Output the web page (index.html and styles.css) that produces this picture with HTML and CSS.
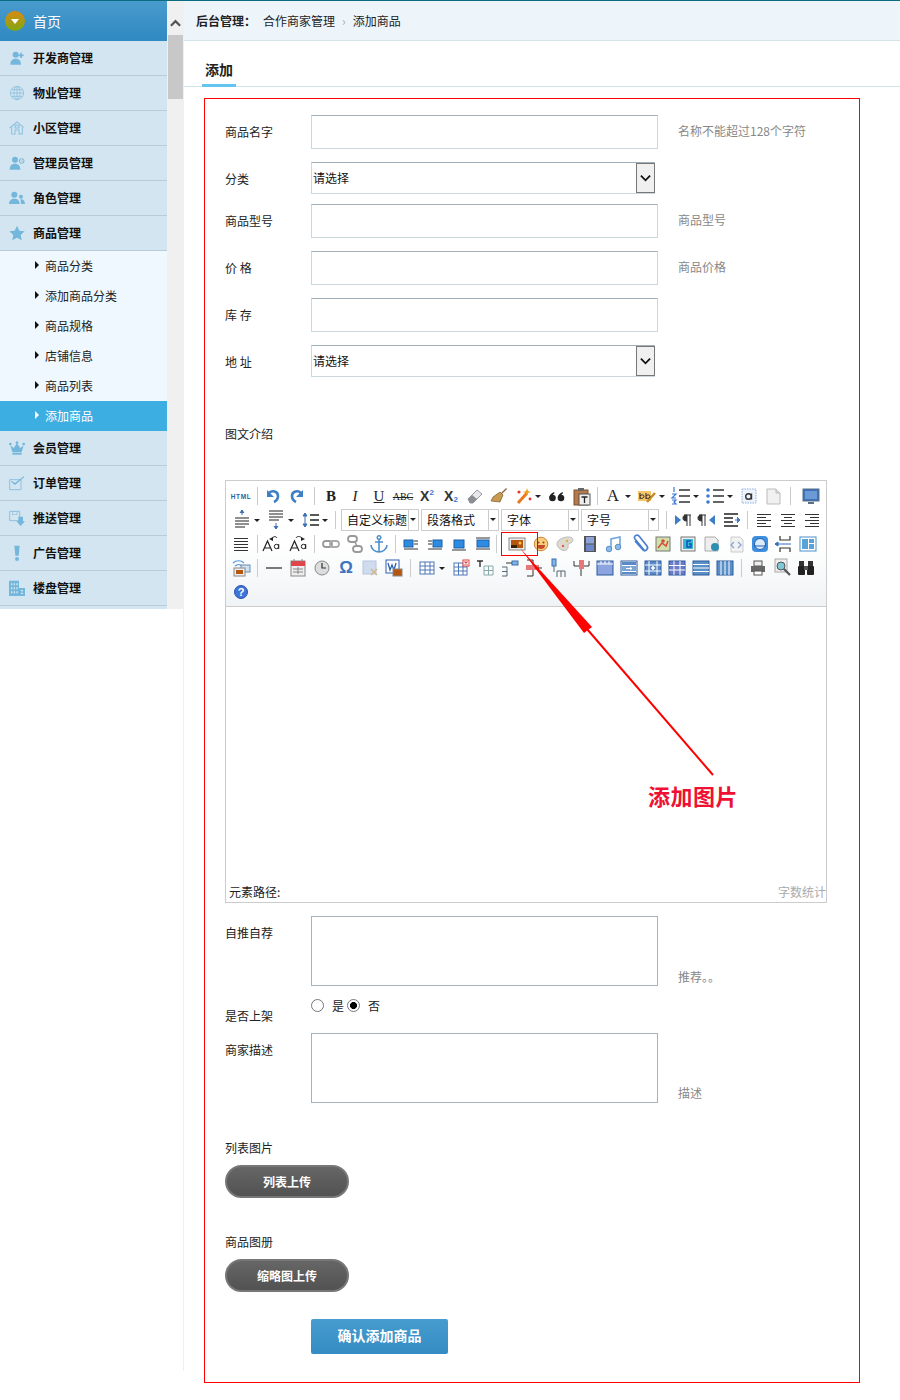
FILE: index.html
```html
<!DOCTYPE html>
<html lang="zh">
<head>
<meta charset="utf-8">
<title>添加商品</title>
<link rel="stylesheet" href="styles.css">
</head>
<body>
<svg class="defs" aria-hidden="true">
  <symbol id="undo" viewBox="0 0 24 24"><path d="M8 9c3-3 9-2 9 3 0 3-2 5-4 6" fill="none" stroke="#3d7fc6" stroke-width="2.6"/><path d="M6 6v7h7z" fill="#3d7fc6"/></symbol>
  <symbol id="redo" viewBox="0 0 24 24"><g transform="matrix(-1 0 0 1 24 0)"><path d="M8 9c3-3 9-2 9 3 0 3-2 5-4 6" fill="none" stroke="#3d7fc6" stroke-width="2.6"/><path d="M6 6v7h7z" fill="#3d7fc6"/></g></symbol>
  <symbol id="eraser" viewBox="0 0 24 24"><path d="M5 15l9-9 5 4-9 9H7z" fill="#e8e8ea" stroke="#9a9aa2"/><path d="M5 15l4-4 5 4-4 4H7z" fill="#8c8c94"/></symbol>
  <symbol id="brush" viewBox="0 0 24 24"><path d="M14 9l5-5 1 1-5 5z" fill="#8a6a44"/><path d="M13 8l3 3-3 7-9-1 2-4z" fill="#c79a4e" stroke="#7a5a30" stroke-width=".7"/></symbol>
  <symbol id="wand" viewBox="0 0 24 24"><path d="M7 19L16 9" stroke="#e87a1c" stroke-width="3"/><path d="M16 4l1 3 3 1-3 1-1 3-1-3-3-1 3-1z" fill="#f0a020"/><circle cx="8" cy="8" r="1.6" fill="#e23a2a"/><circle cx="19" cy="15" r="1.4" fill="#e23a2a"/></symbol>
  <symbol id="quote" viewBox="0 0 24 24"><circle cx="7.500" cy="14" r="3.300" fill="#222"/><circle cx="16" cy="14" r="3.300" fill="#222"/><path d="M4.300 14c0-3 2-5 5-6v1.500c-1.500 1-2 2-2 3.500zM12.800 14c0-3 2-5 5-6v1.500c-1.500 1-2 2-2 3.500z" fill="#222"/></symbol>
  <symbol id="paste" viewBox="0 0 24 24"><rect x="5" y="6" width="14" height="15" fill="#b5794a" stroke="#7a4f2c"/><rect x="9" y="4" width="6" height="3" fill="#666"/><rect x="10" y="10" width="11" height="11" fill="#eee" stroke="#555"/><path d="M12.500 13h6M15.500 13v6" stroke="#222" stroke-width="1.300"/></symbol>
  <symbol id="ab" viewBox="0 0 24 24"><rect x="3" y="7" width="13" height="10" fill="#f6c469"/><path d="M12 18l8-9" stroke="#c98a2a" stroke-width="2.500"/><path d="M5 9v6M5 12c2-2 4-1 4 .5S7 15 5 14M11 9v6M11 12c2-2 4-1 4 .5S13 15 11 14" stroke="#222" fill="none"/></symbol>
  <symbol id="ol" viewBox="0 0 24 24"><path d="M10 6h11M10 12h11M10 18h11" stroke="#333" stroke-width="1.300"/><path d="M5 3v5M3 10h4l-4 4h4M3 16h4l-2 2 2 2H3" fill="none" stroke="#3b78d8" stroke-width="1.200"/></symbol>
  <symbol id="ul" viewBox="0 0 24 24"><path d="M10 6h11M10 12h11M10 18h11" stroke="#333" stroke-width="1.300"/><circle cx="5" cy="6" r="1.800" fill="#3b78d8"/><circle cx="5" cy="12" r="1.800" fill="#3b78d8"/><circle cx="5" cy="18" r="1.800" fill="#3b78d8"/></symbol>
  <symbol id="abox" viewBox="0 0 24 24"><rect x="5" y="5" width="14" height="14" fill="#eef3fb" stroke="#8fb0e0" stroke-dasharray="1.500 1"/><circle cx="11.500" cy="12.500" r="2.800" fill="none" stroke="#333" stroke-width="1.400"/><path d="M14.500 9.500v6" stroke="#333" stroke-width="1.400"/></symbol>
  <symbol id="page" viewBox="0 0 24 24"><path d="M6 5h9l4 4v11H6z" fill="#f1f1f1" stroke="#bbb"/><path d="M15 5v4h4" fill="#ddd" stroke="#bbb"/></symbol>
  <symbol id="monitor" viewBox="0 0 24 24"><rect x="4" y="5" width="16" height="12" fill="#3b72b8" stroke="#5a6f8c"/><rect x="6" y="7" width="12" height="8" fill="#6b9ad6"/><path d="M9 19h6" stroke="#5a6f8c" stroke-width="2"/></symbol>
  <symbol id="spup" viewBox="0 0 24 24"><path d="M12 2v5M10 5l2-3 2 3" stroke="#3d6fb0" fill="#3d6fb0"/><path d="M5 10h14M5 13h14M5 16h14M5 19h10" stroke="#222" stroke-width="1.200"/></symbol>
  <symbol id="spdn" viewBox="0 0 24 24"><path d="M5 3h14M5 6h14M5 9h14M5 12h10" stroke="#222" stroke-width="1.200"/><path d="M12 15v6M10 18l2 3 2-3" stroke="#3d6fb0" fill="#3d6fb0"/></symbol>
  <symbol id="lh" viewBox="0 0 24 24"><path d="M7 5v14M5 8l2-3 2 3zM5 16l2 3 2-3z" stroke="#3d6fb0" fill="#3d6fb0"/><path d="M12 7h9M12 12h9M12 17h9" stroke="#222" stroke-width="1.300"/></symbol>
  <symbol id="ltr" viewBox="0 0 24 24"><path d="M4 7l6 5-6 5z" fill="#3d7fc6"/><path d="M13 7h7M16 7v11M19 7v11M16 13c-3 0-4-1-4-3s1-3 4-3" stroke="#333" fill="#333"/></symbol>
  <symbol id="rtl" viewBox="0 0 24 24"><path d="M20 7l-6 5 6 5z" fill="#3d7fc6"/><path d="M4 7h7M7 7v11M10 7v11M7 13c-3 0-4-1-4-3s1-3 4-3" stroke="#333" fill="#333"/></symbol>
  <symbol id="indent" viewBox="0 0 24 24"><path d="M5 6h14M5 10h9M5 14h9M5 18h14" stroke="#222" stroke-width="1.400"/><path d="M16 12h5M18 9l3 3-3 3" stroke="#3d7fc6" fill="#3d7fc6"/></symbol>
  <symbol id="al" viewBox="0 0 24 24"><path d="M5 6.500h14M5 9.500h9M5 12.500h14M5 15.500h9M5 18.500h14" stroke="#333" stroke-width="1.100"/></symbol>
  <symbol id="ac" viewBox="0 0 24 24"><path d="M5 6.500h14M8 9.500h8M5 12.500h14M8 15.500h8M5 18.500h14" stroke="#333" stroke-width="1.100"/></symbol>
  <symbol id="ar" viewBox="0 0 24 24"><path d="M5 6.500h14M10 9.500h9M5 12.500h14M10 15.500h9M5 18.500h14" stroke="#333" stroke-width="1.100"/></symbol>
  <symbol id="aj" viewBox="0 0 24 24"><path d="M5 6.500h14M5 9.500h14M5 12.500h14M5 15.500h14M5 18.500h14" stroke="#333" stroke-width="1.100"/></symbol>
  <symbol id="au" viewBox="0 0 24 24"><path d="M3 19L7.500 9l4.500 10M5 16h5" fill="none" stroke="#222" stroke-width="1.200"/><path d="M12 7c1-3 4-3 5-1" fill="none" stroke="#222"/><path d="M9 7l4-2v4z" fill="#222"/><circle cx="16.500" cy="14.500" r="2.200" fill="none" stroke="#222"/><path d="M18.700 12v5" stroke="#222"/></symbol>
  <symbol id="ad" viewBox="0 0 24 24"><path d="M3 19L7.500 9l4.500 10M5 16h5" fill="none" stroke="#222" stroke-width="1.200"/><path d="M9 6c1-2 4-2 6 0" fill="none" stroke="#222"/><path d="M18 7l-4-2v4z" fill="#222"/><circle cx="16.500" cy="14.500" r="2.200" fill="none" stroke="#222"/><path d="M18.700 12v5" stroke="#222"/></symbol>
  <symbol id="link" viewBox="0 0 24 24"><rect x="4" y="9" width="9" height="6" rx="3" fill="none" stroke="#999" stroke-width="1.800"/><rect x="11" y="9" width="9" height="6" rx="3" fill="none" stroke="#aaa" stroke-width="1.800"/></symbol>
  <symbol id="unlink" viewBox="0 0 24 24"><rect x="5" y="4" width="9" height="6" rx="3" fill="none" stroke="#999" stroke-width="1.800"/><rect x="10" y="14" width="9" height="6" rx="3" fill="none" stroke="#999" stroke-width="1.800"/><path d="M12 10l2 4" stroke="#999" stroke-width="1.500"/></symbol>
  <symbol id="anchor" viewBox="0 0 24 24"><circle cx="12" cy="5.500" r="1.800" fill="none" stroke="#4f8fc8" stroke-width="1.400"/><path d="M12 7v13M8 10h8M4 13c0 4 4 7 8 7s8-3 8-7" fill="none" stroke="#4f8fc8" stroke-width="1.600"/></symbol>
  <symbol id="il" viewBox="0 0 24 24"><rect x="5" y="8" width="9" height="7" fill="#2e8be0" stroke="#1a5fa8"/><path d="M15 9h4M15 12h4M5 17h14" stroke="#333"/></symbol>
  <symbol id="ir" viewBox="0 0 24 24"><rect x="10" y="8" width="9" height="7" fill="#2e8be0" stroke="#1a5fa8"/><path d="M5 9h4M5 12h4M5 17h14" stroke="#333"/></symbol>
  <symbol id="ic" viewBox="0 0 24 24"><rect x="7" y="8" width="10" height="8" fill="#2e8be0" stroke="#1a5fa8"/><path d="M5 18h14" stroke="#333"/></symbol>
  <symbol id="in" viewBox="0 0 24 24"><path d="M5 6h14M5 17h14" stroke="#333"/><rect x="6" y="8" width="12" height="7" fill="#2e8be0" stroke="#1a5fa8"/></symbol>
  <symbol id="img" viewBox="0 0 24 24"><rect x="4" y="6" width="16" height="12" fill="#ececec" stroke="#888"/><rect x="6" y="8" width="12" height="8" fill="#b4560f"/><circle cx="15" cy="11" r="1.500" fill="#ffc64a"/><path d="M6 13h6v3H6z" fill="#3a2208"/></symbol>
  <symbol id="smile" viewBox="0 0 24 24"><circle cx="12" cy="12" r="6.800" fill="#f8cf78" stroke="#c9833a"/><circle cx="9.500" cy="10.500" r="1" fill="#a33"/><circle cx="14.500" cy="10.500" r="1" fill="#a33"/><path d="M8 13h8c0 3-2 4-4 4s-4-1-4-4z" fill="#c4472f"/></symbol>
  <symbol id="palette" viewBox="0 0 24 24"><path d="M4 12c0-4 6-7 11-7s6 3 4 5-4 1-4 3 1 3-2 5-9-2-9-6z" fill="#dedad0" stroke="#bbb"/><circle cx="10" cy="14" r="1.200" fill="#d9634e"/><circle cx="14" cy="9" r="1.200" fill="#e0b040"/></symbol>
  <symbol id="film" viewBox="0 0 24 24"><rect x="6" y="4" width="12" height="16" fill="#555"/><rect x="8" y="5" width="8" height="6.500" fill="#8ea4d8"/><rect x="8" y="12.500" width="8" height="6.500" fill="#6f88c8"/></symbol>
  <symbol id="music" viewBox="0 0 24 24"><path d="M9 17V7l9-2v10" fill="none" stroke="#6fa6dc" stroke-width="1.600"/><circle cx="7" cy="17" r="2.800" fill="#8cbbe8" stroke="#5a90c8"/><circle cx="16" cy="15" r="2.800" fill="#8cbbe8" stroke="#5a90c8"/></symbol>
  <symbol id="clip" viewBox="0 0 24 24"><path d="M17 18L8 7c-2-3 2-5 4-3l8 10c2 3-2 6-4 4L8 9" fill="none" stroke="#4a7fd0" stroke-width="1.700"/></symbol>
  <symbol id="map" viewBox="0 0 24 24"><rect x="5" y="5" width="14" height="14" fill="#cfe0a8" stroke="#777"/><path d="M7 16l4-5 4 3 2-5" stroke="#d84a3a" fill="none" stroke-width="1.500"/><circle cx="12" cy="9" r="1.800" fill="#d84a3a"/></symbol>
  <symbol id="gmap" viewBox="0 0 24 24"><rect x="5" y="5" width="14" height="14" fill="#eee" stroke="#777"/><rect x="7" y="7" width="10" height="10" fill="#38b8c8"/><path d="M15 9h-4v6h4v-3h-2" fill="none" stroke="#1050c8" stroke-width="1.500"/></symbol>
  <symbol id="iframe" viewBox="0 0 24 24"><path d="M5 5h10l3 3v11H5z" fill="#eee" stroke="#aaa"/><circle cx="15" cy="15" r="4" fill="#2f8fb0"/></symbol>
  <symbol id="code" viewBox="0 0 24 24"><path d="M7 5h9l3 3v12H7z" fill="#f2f2f2" stroke="#ccc"/><path d="M10 10l-3 3 3 3M14 10l3 3-3 3" fill="none" stroke="#8ca8dc" stroke-width="1.400"/></symbol>
  <symbol id="globe" viewBox="0 0 24 24"><rect x="4" y="4" width="16" height="16" rx="4" fill="#3f8fe0"/><circle cx="12" cy="12" r="5.500" fill="#dcebfa" stroke="#1f5fb0"/><path d="M6 14h12" stroke="#1f5fb0"/></symbol>
  <symbol id="pb" viewBox="0 0 24 24"><path d="M8 4v4h10V4M8 20v-4h10v4" fill="none" stroke="#333" stroke-width="1.200"/><path d="M3 12h16M3 12l3-2v4z" stroke="#2f6fc0" fill="#2f6fc0"/></symbol>
  <symbol id="tpl" viewBox="0 0 24 24"><rect x="4" y="5" width="16" height="14" fill="#fff" stroke="#4a90c8"/><rect x="6" y="7" width="6" height="10" fill="#5aa3d8"/><rect x="13" y="7" width="5" height="4" fill="#5aa3d8"/><rect x="13" y="12" width="5" height="5" fill="#5aa3d8"/></symbol>
  <symbol id="wifi" viewBox="0 0 24 24"><path d="M4 7c3-3 8-3 11 0M6 10c2-2 5-2 7 0" fill="none" stroke="#5a9ad8" stroke-width="1.200"/><rect x="12" y="9" width="9" height="7" fill="#cfe0f0" stroke="#6d8bb0"/><rect x="5" y="12" width="11" height="8" fill="#eee" stroke="#888"/><rect x="7" y="14" width="7" height="4" fill="#b4560f"/></symbol>
  <symbol id="hr" viewBox="0 0 24 24"><path d="M4 12h16" stroke="#333" stroke-width="1.300"/></symbol>
  <symbol id="cal" viewBox="0 0 24 24"><rect x="5" y="5" width="14" height="15" fill="#eee" stroke="#888"/><rect x="5" y="5" width="14" height="5" fill="#e0454a"/><path d="M8 3v3M16 3v3M7 13h10M7 16h10M12 11v7" stroke="#888"/></symbol>
  <symbol id="clock" viewBox="0 0 24 24"><circle cx="12" cy="12" r="7" fill="#ddd" stroke="#888"/><path d="M12 7v5h4" fill="none" stroke="#333" stroke-width="1.200"/></symbol>
  <symbol id="snap" viewBox="0 0 24 24"><rect x="5" y="5" width="13" height="13" fill="#cfdcf0" stroke="#b7c6dc"/><path d="M13 13l6 6M19 13l-6 6" stroke="#d0b890" stroke-width="1.500"/></symbol>
  <symbol id="word" viewBox="0 0 24 24"><rect x="4" y="4" width="13" height="13" fill="#fff" stroke="#2a5fb0"/><path d="M6 7l2 7 2-5 2 5 2-7" fill="none" stroke="#2a5fb0" stroke-width="1.300"/><rect x="11" y="13" width="9" height="7" fill="#b4560f" stroke="#888"/></symbol>
  <symbol id="table" viewBox="0 0 24 24"><rect x="5" y="6" width="14" height="12" fill="#fff" stroke="#4f77b8"/><path d="M5 10h14M5 14h14M10 6v12M15 6v12" stroke="#4f77b8"/></symbol>
  <symbol id="deltable" viewBox="0 0 24 24"><rect x="5" y="7" width="13" height="12" fill="#fff" stroke="#4f77b8"/><path d="M5 11h13M5 15h13M9.500 7v12M14 7v12" stroke="#4f77b8"/><rect x="14" y="4" width="6" height="6" fill="#fff" stroke="#e04040"/><path d="M15.500 5.500l3 3M18.500 5.500l-3 3" stroke="#e04040" stroke-width="1.200"/></symbol>
  <symbol id="tp" viewBox="0 0 24 24"><path d="M4 5h6M7 5v6" stroke="#333" stroke-width="1.400"/><path d="M11 10h9v9h-9zM11 14.500h9M15.500 10v9" fill="none" stroke="#8aa" /></symbol>
  <symbol id="c1" viewBox="0 0 24 24"><path d="M5 11h5v9H5M5 15.500h5" fill="none" stroke="#567"/><rect x="15" y="5" width="6" height="4" fill="#7fb4e6" stroke="#3d6fb0"/><path d="M9 7h6" stroke="#333"/></symbol>
  <symbol id="c2" viewBox="0 0 24 24"><rect x="5" y="9" width="13" height="5" fill="#e8777a"/><path d="M6 4h6v5M6 20h6v-6M14 12h7" fill="none" stroke="#333"/></symbol>
  <symbol id="c3" viewBox="0 0 24 24"><rect x="7" y="3" width="4" height="7" fill="#7fb4e6" stroke="#3d6fb0"/><path d="M9 10v6M12 15h8v6M16 15v6M12 15v6" fill="none" stroke="#567"/></symbol>
  <symbol id="c4" viewBox="0 0 24 24"><rect x="10" y="4" width="5" height="9" fill="#e8777a"/><path d="M5 5v5h5M20 5v5h-5M12 13v7" fill="none" stroke="#333"/></symbol>
  <symbol id="m1" viewBox="0 0 24 24"><rect x="4" y="5" width="16" height="14" fill="#8ca4e0" stroke="#2a5a9a"/><path d="M4 8h16M8 5v3M12 5v3M16 5v3" stroke="#fff"/></symbol>
  <symbol id="m2" viewBox="0 0 24 24"><rect x="4" y="5" width="16" height="14" fill="#fff" stroke="#2a5a9a"/><rect x="5" y="6" width="14" height="3" fill="#5a8ac8"/><rect x="5" y="10" width="14" height="5" fill="#7ba4d8"/><rect x="5" y="16" width="14" height="2" fill="#5a8ac8"/><path d="M9 12.500h6M13 11l2 1.500-2 1.500" stroke="#fff"/></symbol>
  <symbol id="m3" viewBox="0 0 24 24"><rect x="4" y="5" width="16" height="14" fill="#5a8ac8" stroke="#2a5a9a"/><path d="M4 9h16M4 15h16M8 5v14M16 5v14" stroke="#fff"/><path d="M12 10v4M10 12h4" stroke="#fff" stroke-width="1.500"/></symbol>
  <symbol id="m4" viewBox="0 0 24 24"><rect x="4" y="5" width="16" height="14" fill="#6c7cc8" stroke="#2a5a9a"/><path d="M4 9.500h16M4 14h16M9 5v14M15 5v14" stroke="#fff"/></symbol>
  <symbol id="m5" viewBox="0 0 24 24"><rect x="4" y="5" width="16" height="14" fill="#5a90c8" stroke="#2a5a9a"/><path d="M4 8.500h16M4 12h16M4 15.500h16" stroke="#fff"/></symbol>
  <symbol id="m6" viewBox="0 0 24 24"><rect x="4" y="5" width="16" height="14" fill="#5a90c8" stroke="#2a5a9a"/><path d="M8 5v14M12 5v14M16 5v14" stroke="#fff"/></symbol>
  <symbol id="print" viewBox="0 0 24 24"><rect x="8" y="5" width="8" height="5" fill="#eee" stroke="#555"/><rect x="5" y="10" width="14" height="6" fill="#666"/><rect x="8" y="15" width="8" height="4" fill="#fff" stroke="#555"/></symbol>
  <symbol id="zoom" viewBox="0 0 24 24"><rect x="5" y="3" width="12" height="13" fill="#eee" stroke="#aaa"/><circle cx="11" cy="10" r="4" fill="#7fc8d8" stroke="#555"/><path d="M14 13l6 6" stroke="#555" stroke-width="2.200"/></symbol>
  <symbol id="find" viewBox="0 0 24 24"><rect x="5" y="5" width="5" height="5" fill="#333"/><rect x="14" y="5" width="5" height="5" fill="#333"/><rect x="4" y="10" width="7" height="9" rx="1" fill="#222"/><rect x="13" y="10" width="7" height="9" rx="1" fill="#222"/><rect x="10" y="10" width="4" height="4" fill="#555"/></symbol>
  <symbol id="n-add" viewBox="0 0 24 24"><circle cx="10" cy="7" r="4.500"/><path d="M2 22c0-6 3-9 8-9s8 3 8 9z"/><path d="M18 4v8M14 8h8" stroke="#74b7dc" stroke-width="2.500"/></symbol>
  <symbol id="n-globe" viewBox="0 0 24 24"><g fill="none" stroke="#8ec1df" stroke-width="1.300"><circle cx="12" cy="12" r="10"/><ellipse cx="12" cy="12" rx="4.500" ry="10"/><path d="M2 12h20M3.500 7h17M3.500 17h17M12 2v20"/></g></symbol>
  <symbol id="n-house" viewBox="0 0 24 24"><g fill="none" stroke="#8ec1df" stroke-width="1.600"><path d="M1 12L12 3l10 8M4 11v10h5v-6h6v6h5V11"/><rect x="9" y="8" width="6" height="4"/></g></symbol>
  <symbol id="n-ban" viewBox="0 0 24 24"><circle cx="9" cy="7" r="4.500"/><path d="M1 22c0-6 3-9 8-9s8 3 8 9z"/><circle cx="19" cy="9" r="3.500" fill="none" stroke="#74b7dc" stroke-width="1.500"/><path d="M17 7l4 4" stroke="#74b7dc"/></symbol>
  <symbol id="n-users" viewBox="0 0 24 24"><circle cx="8" cy="7" r="4.500"/><circle cx="18" cy="10" r="3"/><path d="M0 21c0-5 3-8 8-8s8 3 8 8z"/><path d="M17 14c4 0 7 2 7 7h-6c0-3-.5-5-1-7z"/></symbol>
  <symbol id="n-star" viewBox="0 0 24 24"><path d="M12 1l3.500 7.500 8 1-6 5.500 1.700 8L12 19l-7.200 4 1.700-8-6-5.500 8-1z"/></symbol>
  <symbol id="n-crown" viewBox="0 0 24 24"><circle cx="2" cy="6" r="2"/><circle cx="22" cy="6" r="2"/><circle cx="12" cy="4" r="2"/><path d="M2 8l5 4 5-7 5 7 5-4-3 10H5z"/><rect x="5" y="19" width="14" height="3"/></symbol>
  <symbol id="n-check" viewBox="0 0 24 24"><path d="M1 7h17v15H1z" fill="none" stroke="#8ec1df" stroke-width="1.500"/><path d="M3 10l6 5L23 3l-1-1L9 12l-5-3z"/></symbol>
  <symbol id="n-push" viewBox="0 0 24 24"><path d="M1 2h15v14H1z" fill="none" stroke="#8ec1df" stroke-width="1.500"/><rect x="5" y="2" width="7" height="5" fill="none" stroke="#8ec1df"/><path d="M14 10h7v7h3l-6.500 7-6.500-7h3z"/></symbol>
  <symbol id="n-ex" viewBox="0 0 24 24"><path d="M8 1h8l-1.500 15h-5z"/><circle cx="12" cy="21" r="3"/></symbol>
  <symbol id="n-bld" viewBox="0 0 24 24"><path d="M0 1h15v23H0zM15 12h9v12h-9z"/><path d="M3 5h2v3H3zM7 5h2v3H7zM11 5h2v3h-2zM3 11h2v3H3zM7 11h2v3H7zM11 11h2v3h-2zM3 17h2v3H3zM7 17h2v3H7zM11 17h2v3h-2zM18 15h3v2h-3zM18 19h3v2h-3z" fill="#d3e5f0"/></symbol>
</svg>

<div class="page">
  <aside class="sidecol">
    <div class="sidewrap">
      <nav class="side">
        <a class="home"><span class="home-dot"><i class="home-tri"></i></span>首页</a>
        <a class="nav"><svg class="nav-i"><use href="#n-add"/></svg><span class="nav-t">开发商管理</span></a>
        <a class="nav"><svg class="nav-i"><use href="#n-globe"/></svg><span class="nav-t">物业管理</span></a>
        <a class="nav"><svg class="nav-i"><use href="#n-house"/></svg><span class="nav-t">小区管理</span></a>
        <a class="nav"><svg class="nav-i"><use href="#n-ban"/></svg><span class="nav-t">管理员管理</span></a>
        <a class="nav"><svg class="nav-i"><use href="#n-users"/></svg><span class="nav-t">角色管理</span></a>
        <a class="nav"><svg class="nav-i"><use href="#n-star"/></svg><span class="nav-t">商品管理</span></a>
        <div class="subs">
          <a class="sub"><span class="sub-t">商品分类</span></a>
          <a class="sub"><span class="sub-t">添加商品分类</span></a>
          <a class="sub"><span class="sub-t">商品规格</span></a>
          <a class="sub"><span class="sub-t">店铺信息</span></a>
          <a class="sub"><span class="sub-t">商品列表</span></a>
          <a class="sub sub-on"><span class="sub-t">添加商品</span></a>
        </div>
        <a class="nav"><svg class="nav-i"><use href="#n-crown"/></svg><span class="nav-t">会员管理</span></a>
        <a class="nav"><svg class="nav-i"><use href="#n-check"/></svg><span class="nav-t">订单管理</span></a>
        <a class="nav"><svg class="nav-i"><use href="#n-push"/></svg><span class="nav-t">推送管理</span></a>
        <a class="nav"><svg class="nav-i"><use href="#n-ex"/></svg><span class="nav-t">广告管理</span></a>
        <a class="nav"><svg class="nav-i"><use href="#n-bld"/></svg><span class="nav-t">楼盘管理</span></a>
      </nav>
      <div class="scroll">
        <div class="scroll-up"><svg class="scroll-a" viewBox="0 0 12 8"><path d="M1 7l5-5 5 5" fill="none" stroke="#555" stroke-width="2.400"/></svg></div>
        <div class="scroll-thumb"></div>
      </div>
    </div>
  </aside>

  <main class="main">
    <div class="crumb"><b class="crumb-b">后台管理：</b><span>合作商家管理</span><span class="crumb-sep">›</span><span>添加商品</span></div>
    <div class="tabs"><span class="tab">添加</span></div>

    <form class="box">
      <div class="row"><label class="lab">商品名字</label><input class="inp" type="text"><span class="hint">名称不能超过128个字符</span></div>
      <div class="row row-s"><label class="lab lab-s">分类</label><div class="sel"><select class="sel-in"><option>请选择</option></select><span class="sel-btn"><svg class="sel-i" viewBox="0 0 12 8"><path d="M1 1.500l5 5 5-5" fill="none" stroke="#111" stroke-width="2"/></svg></span></div></div>
      <div class="row"><label class="lab">商品型号</label><input class="inp" type="text"><span class="hint">商品型号</span></div>
      <div class="row"><label class="lab">价 格</label><input class="inp" type="text"><span class="hint">商品价格</span></div>
      <div class="row"><label class="lab">库 存</label><input class="inp" type="text"></div>
      <div class="row row-s"><label class="lab lab-s">地 址</label><div class="sel"><select class="sel-in"><option>请选择</option></select><span class="sel-btn"><svg class="sel-i" viewBox="0 0 12 8"><path d="M1 1.500l5 5 5-5" fill="none" stroke="#111" stroke-width="2"/></svg></span></div></div>

      <div class="rich-lab">图文介绍</div>

      <div class="editor">
        <div class="bar">
          <div class="tr">
            <span class="b t-html">HTML</span><i class="s"></i>
            <svg class="b"><use href="#undo"/></svg><svg class="b"><use href="#redo"/></svg><i class="s s-w"></i>
            <span class="b t-b">B</span><span class="b t-i">I</span><span class="b t-u">U</span><span class="b t-s">ABC</span>
            <span class="b t-x">X<span class="t-sup">2</span></span><span class="b t-x">X<span class="t-sub">2</span></span>
            <svg class="b"><use href="#eraser"/></svg><svg class="b"><use href="#brush"/></svg><svg class="b"><use href="#wand"/></svg><i class="a"></i>
            <svg class="b"><use href="#quote"/></svg><svg class="b"><use href="#paste"/></svg><i class="s"></i>
            <span class="b t-a">A</span><i class="a"></i><svg class="b"><use href="#ab"/></svg><i class="a"></i>
            <svg class="b"><use href="#ol"/></svg><i class="a"></i><svg class="b"><use href="#ul"/></svg><i class="a"></i>
            <svg class="b"><use href="#abox"/></svg><svg class="b"><use href="#page"/></svg><i class="s s-x"></i><svg class="b"><use href="#monitor"/></svg>
          </div>
          <div class="tr tr2">
            <svg class="b"><use href="#spup"/></svg><i class="a"></i><svg class="b"><use href="#spdn"/></svg><i class="a"></i><svg class="b"><use href="#lh"/></svg><i class="a"></i><i class="s s-c"></i>
            <span class="combo">自定义标题</span><span class="combo">段落格式</span><span class="combo">字体</span><span class="combo">字号</span>
            <i class="s s-d"></i>
            <svg class="b"><use href="#ltr"/></svg><svg class="b"><use href="#rtl"/></svg><svg class="b"><use href="#indent"/></svg><i class="s s-e"></i>
            <svg class="b"><use href="#al"/></svg><svg class="b"><use href="#ac"/></svg><svg class="b"><use href="#ar"/></svg>
          </div>
          <div class="tr">
            <svg class="b"><use href="#aj"/></svg><i class="s s-f"></i><svg class="b"><use href="#au"/></svg><svg class="b b-l3"><use href="#ad"/></svg><i class="s s-g"></i>
            <svg class="b"><use href="#link"/></svg><svg class="b"><use href="#unlink"/></svg><svg class="b"><use href="#anchor"/></svg><i class="s"></i>
            <svg class="b"><use href="#il"/></svg><svg class="b"><use href="#ir"/></svg><svg class="b"><use href="#ic"/></svg><svg class="b"><use href="#in"/></svg><i class="s s-h"></i>
            <svg class="b"><use href="#img"/></svg><svg class="b"><use href="#smile"/></svg><svg class="b"><use href="#palette"/></svg><svg class="b b-l1"><use href="#film"/></svg><svg class="b"><use href="#music"/></svg><svg class="b b-l1"><use href="#clip"/></svg><svg class="b"><use href="#map"/></svg><svg class="b b-l1"><use href="#gmap"/></svg><svg class="b"><use href="#iframe"/></svg><svg class="b"><use href="#code"/></svg><svg class="b"><use href="#globe"/></svg><svg class="b"><use href="#pb"/></svg><svg class="b"><use href="#tpl"/></svg>
          </div>
          <div class="tr">
            <svg class="b"><use href="#wifi"/></svg><i class="s s-i"></i>
            <svg class="b"><use href="#hr"/></svg><svg class="b"><use href="#cal"/></svg><svg class="b"><use href="#clock"/></svg><span class="b t-o">Ω</span><svg class="b"><use href="#snap"/></svg><svg class="b"><use href="#word"/></svg><i class="s s-i"></i>
            <svg class="b"><use href="#table"/></svg><i class="a"></i><svg class="b"><use href="#deltable"/></svg><svg class="b"><use href="#tp"/></svg><svg class="b"><use href="#c1"/></svg><svg class="b"><use href="#c2"/></svg><svg class="b"><use href="#c3"/></svg><svg class="b"><use href="#c4"/></svg>
            <svg class="b"><use href="#m1"/></svg><svg class="b"><use href="#m2"/></svg><svg class="b"><use href="#m3"/></svg><svg class="b"><use href="#m4"/></svg><svg class="b"><use href="#m5"/></svg><svg class="b"><use href="#m6"/></svg><i class="s s-i"></i>
            <svg class="b"><use href="#print"/></svg><svg class="b"><use href="#zoom"/></svg><svg class="b"><use href="#find"/></svg>
          </div>
          <div class="tr">
            <span class="b t-help">?</span>
          </div>
        </div>
        <div class="edit-area"></div>
        <div class="edit-foot"><span>元素路径:</span><span class="count">字数统计</span></div>

        <div class="mark-box"></div>
        <svg class="mark-arrow" viewBox="0 0 602 423"><path d="M295 68L367 147 359 153z" fill="#ff0000"/><path d="M362 149L488 295" stroke="#ff0000" stroke-width="2"/></svg>
        <div class="mark-text">添加图片</div>
      </div>

      <div class="row-t row-t1"><label class="lab-t">自推自荐</label><textarea class="txt"></textarea><span class="hint-b">推荐。。</span></div>
      <div class="row-r"><label class="lab-r">是否上架</label><span class="radios"><input class="rad" type="radio" name="up"><span class="rad-t">是</span><input class="rad" type="radio" name="up" checked><span class="rad-t">否</span></span></div>
      <div class="row-t"><label class="lab-t">商家描述</label><textarea class="txt"></textarea><span class="hint-b">描述</span></div>

      <div class="up up1"><div class="up-lab">列表图片</div><button class="pill" type="button">列表上传</button></div>
      <div class="up up2"><div class="up-lab">商品图册</div><button class="pill" type="button">缩略图上传</button></div>
      <button class="ok" type="button">确认添加商品</button>
    </form>
  </main>
</div>
</body>
</html>
```

FILE: styles.css
```css
* { box-sizing: border-box; }
html, body { margin: 0; padding: 0; background: #fff; }
body {
  font-family: "Noto Sans CJK SC", "Liberation Sans", sans-serif;
  font-size: 12px;
  color: #222;
  height: 1400px;
  overflow: hidden;
  border-top: 1px solid #0b6b80;
}
.defs { display: none; }
.page { display: flex; align-items: flex-start; }

/* sidebar */
.sidecol { width: 184px; flex: none; height: 1370px; border-right: 1px solid #f0f0f0; }
.sidewrap { display: flex; height: 608px; width: 183px; }
.side { width: 167px; flex: none; background: #d3e5f0; height: 608px; overflow: hidden; }
.home {
  display: flex; align-items: center; height: 40px; color: #fff; font-size: 14px;
  background: linear-gradient(#489bcc, #3089c2);
  padding-left: 5px;
}
.home-dot {
  width: 20px; height: 20px; border-radius: 50%; margin-right: 8px;
  background: linear-gradient(#d98a10, #7da814);
  display: flex; align-items: center; justify-content: center;
}
.home-tri { width: 0; height: 0; border-left: 4px solid transparent; border-right: 4px solid transparent; border-top: 5px solid #fff; }
.nav {
  display: flex; align-items: center; height: 35px; font-weight: 700; color: #111;
  border-bottom: 1px solid #b9cdd9; padding-left: 9px;
}
.nav-t { padding-bottom: 2px; }
.nav-i { width: 16px; height: 16px; fill: #74b7dc; margin-right: 8px; flex: none; }
.subs { background: #eff8ff; }
.sub { display: flex; align-items: center; height: 30px; padding-left: 45px; position: relative; color: #222; }
.sub-t { padding-bottom: 2px; }
.sub::before {
  content: ""; position: absolute; left: 35px; top: 10px; width: 0; height: 0;
  border-top: 4px solid transparent; border-bottom: 4px solid transparent; border-left: 4.5px solid #111;
}
.sub-on { background: #3daee2; color: #fff; }
.sub-on::before { border-left-color: #fff; }
.scroll { width: 16px; background: #f0f0f0; padding-left: 1px; flex: none; }
.scroll-up { height: 34px; display: flex; align-items: center; justify-content: center; padding-top: 9px; }
.scroll-a { width: 11px; height: 8px; }
.scroll-thumb { height: 64px; background: #c8c8c8; }

/* main */
.main { flex: 1; min-width: 0; }
.crumb {
  height: 40px; background: #edf5fb; border-bottom: 1px solid #d5e3ec;
  display: flex; align-items: center; padding-left: 12px; color: #222;
}
.crumb-b { font-weight: 700; margin-right: 7px; }
.crumb-sep { color: #aaa; margin: 0 7px; }
.tabs { height: 46px; border-bottom: 1px solid #d3e3ea; padding-left: 18px; display: flex; align-items: flex-end; }
.tab {
  width: 34px; height: 30px; text-align: center; font-size: 14px; font-weight: 700; color: #222;
  border-bottom: 3px solid #64c6f0; margin-bottom: -1px; line-height: 24px;
}
.box {
  display: block; width: 656px; height: 1285px; margin: 11px 0 0 20px;
  border: 1px solid #f00; padding: 16px 20px 0;
}
.row { display: flex; align-items: center; height: 34px; margin-bottom: 13px; }
.row-s { height: 32px; margin-bottom: 10px; }
.lab { width: 86px; flex: none; padding-bottom: 2px; }
.lab-s { padding: 1px 0 0; }
.inp {
  width: 347px; height: 34px; background: #fff; flex: none;
  border: 1px solid #ccd8df; border-top-color: #a2b0ba; outline: 0;
}
.hint { margin-left: 20px; color: #888; padding-bottom: 4px; }
.sel { position: relative; width: 344px; height: 32px; flex: none; }
.sel-in {
  display: block; width: 100%; height: 100%; padding: 0 0 2px 1px; appearance: none; -webkit-appearance: none;
  background: #fff; border: 1px solid #ccd8df; border-top-color: #a2b0ba; border-radius: 0; outline: 0;
  font: inherit; color: #111;
}
.sel-btn {
  position: absolute; right: 0; top: 1px; bottom: 1px; width: 19px; background: #f0f0f0;
  border: 1px solid #777; display: flex; align-items: center; justify-content: center;
  pointer-events: none;
}
.sel-i { width: 11px; height: 8px; }
.rich-lab { margin-top: 48px; height: 17px; line-height: 17px; }

/* editor */
.editor {
  position: relative; width: 602px; height: 423px; margin-top: 38px;
  border: 1px solid #ccc; display: flex; flex-direction: column;
}
.bar {
  height: 126px; flex: none; padding: 3px 0 0 3px; border-bottom: 1px solid #ccc;
  background: linear-gradient(#fff 50%, #f0f3f5);
}
.tr { display: flex; align-items: center; height: 24px; }
.tr2 { padding-left: 1px; }
.b { width: 24px; height: 24px; flex: none; display: flex; align-items: center; justify-content: center; color: #222; }
.b-l3 { margin-left: 3px; }
.b-l1 { margin-left: 1px; }
.a { width: 10px; flex: none; display: block; }
.a::before { content: ""; display: block; width: 0; height: 0; border-left: 3px solid transparent; border-right: 3px solid transparent; border-top: 3.5px solid #222; }
.s { width: 1px; height: 18px; background: #ccc; margin: 0 3px 0 4px; flex: none; }
.s-w { margin: 0 4px 0 5px; }
.s-x { margin: 0 8px 0 5px; }
.s-c { margin: 0 5px 0 3px; }
.s-d { margin: 0 4px 0 5px; }
.s-e { margin: 0 4px 0 4px; }
.s-f { margin: 0 2px 0 4px; }
.s-g { margin: 0 4px 0 3px; }
.s-h { margin: 0 8px 0 1px; }
.s-i { margin: 0 4px 0 4px; }
.t-html { font: 700 6.5px "Liberation Sans", sans-serif; letter-spacing: .6px; color: #2b5f9e; }
.t-b { font: 700 15px "Liberation Serif", serif; }
.t-i { font: italic 15px "Liberation Serif", serif; }
.t-u { font: 15px "Liberation Serif", serif; text-decoration: underline; }
.t-s { font: 10px "Liberation Serif", serif; text-decoration: line-through; }
.t-x { font: 700 14px "Liberation Sans", sans-serif; color: #333; }
.t-sup, .t-sub { font-size: 8px; color: #3b78d8; }
.t-sup { margin-top: -8px; }
.t-sub { margin-top: 7px; }
.t-a { font: 17px "Liberation Serif", serif; }
.t-o { font: 700 17px "Liberation Sans", sans-serif; color: #3d74c0; }
.t-help {
  font: 700 11px "Liberation Sans", sans-serif; color: #fff; width: 14px; height: 14px; margin-left: 5px;
  border-radius: 50%; background: #3f74d8; border: 1px solid #2a55b0;
}
.combo {
  width: 78px; height: 22px; flex: none; margin-right: 2px; position: relative;
  border: 1px solid #ccc; padding-left: 5px; line-height: 20px; color: #111;
}
.combo::before { content: ""; position: absolute; right: 9px; top: 0; bottom: 0; width: 1px; background: #ccc; }
.combo::after {
  content: ""; position: absolute; right: 2px; top: 8px; width: 0; height: 0;
  border-left: 3px solid transparent; border-right: 3px solid transparent; border-top: 3.5px solid #222;
}
.edit-area { flex: 1; background: #fff; }
.edit-foot {
  height: 20px; display: flex; justify-content: space-between; padding-left: 3px;
  line-height: 20px; color: #222;
}
.count { color: #aaa; }
.mark-box { position: absolute; left: 275px; top: 51px; width: 37px; height: 24px; border: 1px solid #f00; }
.mark-arrow { position: absolute; left: -1px; top: -1px; width: 602px; height: 423px; pointer-events: none; }
.mark-text {
  position: absolute; left: 422px; top: 298px; font-size: 22px; letter-spacing: .5px; font-weight: 700; color: #ee1133;
  line-height: 32px; white-space: nowrap;
}

/* lower fields */
.row-t { display: flex; align-items: flex-start; height: 70px; position: relative; }
.row-t1 { margin-top: 13px; }
.lab-t { width: 86px; flex: none; padding-top: 8px; line-height: 17px; }
.txt { width: 347px; height: 70px; flex: none; border: 1px solid #a6b3bd; resize: none; outline: 0; background: #fff; }
.hint-b { margin-left: 20px; align-self: flex-end; color: #888; line-height: 17px; padding-bottom: 2px; }
.row-t1 .hint-b { padding-bottom: 1px; }
.row-r { display: flex; height: 47px; }
.lab-r { width: 86px; flex: none; padding-top: 21px; line-height: 17px; }
.radios { display: flex; align-items: center; height: 17px; margin-top: 11px; }
.rad {
  appearance: none; -webkit-appearance: none; width: 13px; height: 13px; margin: 0 8px 0 0; flex: none;
  border: 1px solid #777; border-radius: 50%; background: #fff;
}
.rad:checked { background: radial-gradient(circle, #000 0 3.2px, #fff 3.8px); }
.rad-t { margin-right: 3px; width: 12px; }
.up-lab { line-height: 15px; height: 17px; margin-bottom: 8px; }
.up1 { margin-top: 37px; }
.up2 { margin-top: 36px; }
.pill {
  display: block; width: 124px; height: 33px; border-radius: 17px; border: 2px solid #777;
  background: linear-gradient(#666, #525252); color: #fff; font: 700 12px "Noto Sans CJK SC", sans-serif;
}
.ok {
  display: block; width: 137px; height: 35px; margin: 27px 0 0 86px; border: 0; border-radius: 2px; padding: 0 0 3px;
  background: linear-gradient(#469ccd, #358cc4); color: #fff; font: 700 14px "Noto Sans CJK SC", sans-serif;
}
```
